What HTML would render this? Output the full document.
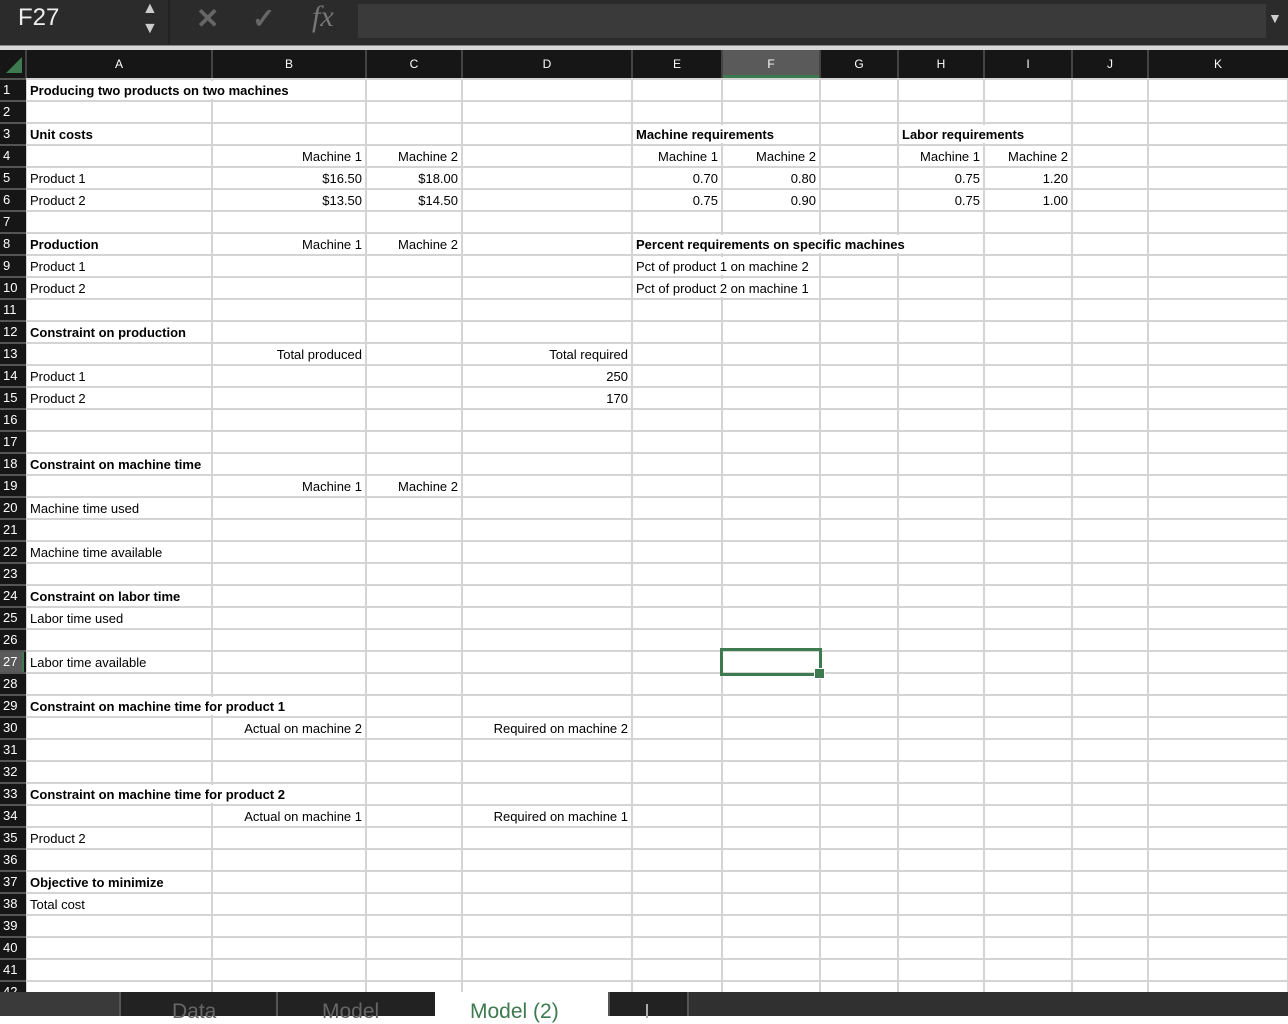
<!DOCTYPE html>
<html><head><meta charset="utf-8"><style>
body{margin:0;width:1288px;height:1016px;overflow:hidden;background:#fff;font-family:"Liberation Sans",sans-serif;position:relative}
.a{position:absolute}
.t{position:absolute;font-size:13px;line-height:19px;height:18px;white-space:nowrap;color:#000;background:#fff;padding:0 2px}
.b{font-weight:bold}
.rh{position:absolute;left:0;width:24px;color:#fff;font-size:13px;line-height:20px;padding-left:3px;box-sizing:border-box}
.ch{position:absolute;top:50px;height:27px;line-height:29px;color:#fff;font-size:12px;text-align:center}
</style></head><body>
<div class="a" style="left:0;top:0;width:1288px;height:45px;background:#2b2b2b"></div>
<div class="a" style="left:0;top:45px;width:1288px;height:5px;background:#d8d8d8;border-top:1px solid #888"></div>
<div class="a" style="left:18px;top:4px;color:#eee;font-size:24px">F27</div>
<div class="a" style="left:142px;top:0px;color:#ccc;font-size:16px">▲</div>
<div class="a" style="left:142px;top:20px;color:#ccc;font-size:16px">▼</div>
<div class="a" style="left:168px;top:0;width:2px;height:44px;background:#222"></div>
<div class="a" style="left:196px;top:2px;color:#666;font-size:28px;font-weight:bold">✕</div>
<div class="a" style="left:252px;top:2px;color:#666;font-size:28px;font-weight:bold">✓</div>
<div class="a" style="left:312px;top:0px;color:#777;font-size:30px;font-style:italic;font-family:'Liberation Serif',serif">fx</div>
<div class="a" style="left:358px;top:4px;width:908px;height:34px;background:#3a3a3a"></div>
<div class="a" style="left:1268px;top:10px;color:#ccc;font-size:14px">▼</div>
<div class="a" style="left:0;top:50px;width:1288px;height:28px;background:#161616"></div>
<div class="a" style="left:6px;top:57px;width:0;height:0;border-left:16px solid transparent;border-bottom:16px solid #3d7a4f"></div>
<div id="g"></div>
<div class="a" style="left:0;top:992px;width:1288px;height:24px;background:#303030"></div>
<div class="a" style="left:0;top:992px;width:119px;height:24px;background:#3a3a3a"></div>
<div class="a" style="left:119px;top:992px;width:2px;height:24px;background:#555"></div>
<div class="a" style="left:276px;top:992px;width:2px;height:24px;background:#555"></div>
<div class="a" style="left:121px;top:992px;width:155px;height:24px;background:#222"></div>
<div class="a" style="left:278px;top:992px;width:157px;height:24px;background:#222"></div>
<div class="a" style="left:435px;top:992px;width:173px;height:24px;background:#fff"></div>
<div class="a" style="left:608px;top:992px;width:77px;height:24px;background:#222;border-left:2px solid #555;border-right:2px solid #555"></div>
<div class="a" style="left:172px;top:1000px;color:#666;font-size:21px">Data</div>
<div class="a" style="left:322px;top:1000px;color:#666;font-size:21px">Model</div>
<div class="a" style="left:470px;top:1000px;color:#3d7a4f;font-size:21px">Model (2)</div>
<div class="a" style="left:646px;top:1004px;width:2px;height:14px;background:#aaa"></div>
<div class="a" style="left:720px;top:648px;width:96px;height:22px;border:3px solid #3d7a4f"></div>
<div class="a" style="left:814px;top:668px;width:9px;height:9px;background:#3d7a4f;border:1px solid #fff"></div>
<script>
var X=[26,212,366,462,632,722,820,898,984,1072,1148,1288],L="ABCDEFGHIJK",h="";
for(var i=0;i<11;i++){h+='<div class="ch" style="left:'+X[i]+'px;width:'+(X[i+1]-X[i])+'px;'+(i==5?'background:#5a5a5a;border-bottom:3px solid #3d7a4f;height:25px;':'')+'">'+L[i]+'</div>';
 h+='<div class="a" style="left:'+(X[i]-1)+'px;top:50px;width:2px;height:28px;background:#444"></div>';}
for(var i=0;i<X.length;i++)h+='<div class="a" style="left:'+(X[i]-1)+'px;top:78px;width:2px;height:914px;background:#d4d4d4"></div>';
h+='<div class="a" style="left:0;top:78px;width:26px;height:914px;background:#161616"></div>';
for(var n=0;n<=42;n++){var y=78+22*n;h+='<div class="a" style="left:26px;top:'+y+'px;width:1262px;height:2px;background:#d4d4d4"></div><div class="a" style="left:0;top:'+y+'px;width:26px;height:2px;background:#555"></div>';
 if(n<42)h+='<div class="rh" style="top:'+(y+2)+'px;'+(n==26?'background:#5a5a5a;border-right:2px solid #3d7a4f;':'')+'">'+(n+1)+'</div>';}
var C={A:0,B:1,C:2,D:3,E:4,F:5,G:6,H:7,I:8};
var D=[[1,'A','Producing two products on two machines','b'],[3,'A','Unit costs','b'],[3,'E','Machine requirements','b'],[3,'H','Labor requirements','b'],
[4,'B','Machine 1','r'],[4,'C','Machine 2','r'],[4,'E','Machine 1','r'],[4,'F','Machine 2','r'],[4,'H','Machine 1','r'],[4,'I','Machine 2','r'],
[5,'A','Product 1'],[5,'B','$16.50','r'],[5,'C','$18.00','r'],[5,'E','0.70','r'],[5,'F','0.80','r'],[5,'H','0.75','r'],[5,'I','1.20','r'],
[6,'A','Product 2'],[6,'B','$13.50','r'],[6,'C','$14.50','r'],[6,'E','0.75','r'],[6,'F','0.90','r'],[6,'H','0.75','r'],[6,'I','1.00','r'],
[8,'A','Production','b'],[8,'B','Machine 1','r'],[8,'C','Machine 2','r'],[8,'E','Percent requirements on specific machines','b'],
[9,'A','Product 1'],[9,'E','Pct of product 1 on machine 2'],[10,'A','Product 2'],[10,'E','Pct of product 2 on machine 1'],
[12,'A','Constraint on production','b'],[13,'B','Total produced','r'],[13,'D','Total required','r'],[14,'A','Product 1'],[14,'D','250','r'],[15,'A','Product 2'],[15,'D','170','r'],
[18,'A','Constraint on machine time','b'],[19,'B','Machine 1','r'],[19,'C','Machine 2','r'],[20,'A','Machine time used'],[22,'A','Machine time available'],
[24,'A','Constraint on labor time','b'],[25,'A','Labor time used'],[27,'A','Labor time available'],
[29,'A','Constraint on machine time for product 1','b'],[30,'B','Actual on machine 2','r'],[30,'D','Required on machine 2','r'],
[33,'A','Constraint on machine time for product 2','b'],[34,'B','Actual on machine 1','r'],[34,'D','Required on machine 1','r'],[35,'A','Product 2'],
[37,'A','Objective to minimize','b'],[38,'A','Total cost']];
D.forEach(function(d){var c=C[d[1]],y=78+22*(d[0]-1)+3,s=d[3]||'';
 if(s=='r')h+='<div class="t" style="top:'+y+'px;right:'+(1288-X[c+1]+2)+'px">'+d[2]+'</div>';
 else h+='<div class="t '+s+'" style="top:'+y+'px;left:'+(X[c]+2)+'px">'+d[2]+'</div>';});
document.getElementById('g').innerHTML=h;
</script>
</body></html>
